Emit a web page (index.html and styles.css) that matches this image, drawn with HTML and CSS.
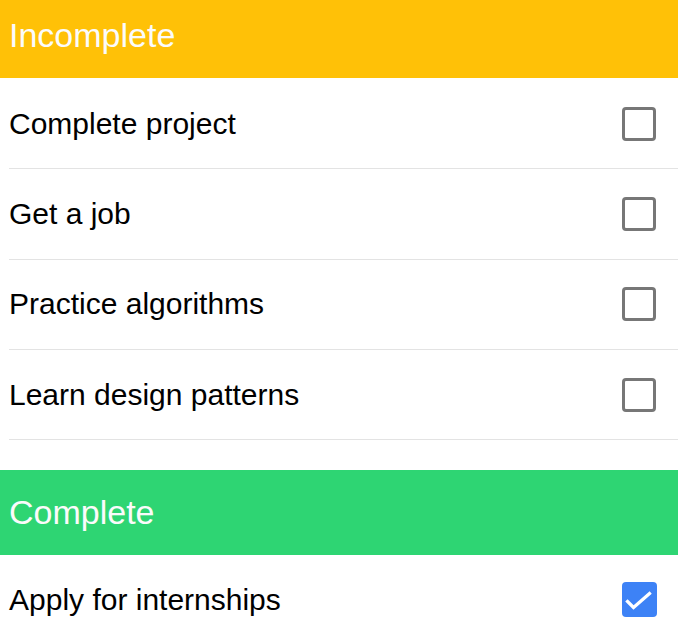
FILE: index.html
```html
<!DOCTYPE html>
<html>
<head>
<meta charset="utf-8">
<link rel="stylesheet" href="styles.css">
</head>
<body>
  <section class="group">
    <h2 class="header header-incomplete">Incomplete</h2>
    <ul class="list list-incomplete">
      <li class="item"><span class="label">Complete project</span><span class="box"></span></li>
      <li class="item"><span class="label">Get a job</span><span class="box"></span></li>
      <li class="item"><span class="label">Practice algorithms</span><span class="box"></span></li>
      <li class="item"><span class="label">Learn design patterns</span><span class="box"></span></li>
    </ul>
  </section>
  <section class="group">
    <h2 class="header header-complete">Complete</h2>
    <ul class="list">
      <li class="item"><span class="label">Apply for internships</span><span class="box box-checked"><svg width="35" height="35" viewBox="0 0 35 35"><polyline points="5.5,19.5 11.5,25.5 27.5,11.5" fill="none" stroke="#fff" stroke-width="3.2" stroke-linecap="square"/></svg></span></li>
    </ul>
  </section>
</body>
</html>
```
FILE: styles.css
```css
html, body {
  margin: 0;
  padding: 0;
  background: #fff;
  overflow: hidden;
}
body {
  font-family: "Liberation Sans", Arial, sans-serif;
  color: #000;
}
.group {
  display: block;
}
.header {
  margin: 0;
  font-weight: normal;
  font-size: 34px;
  color: #fbfbfb;
  padding: 0 9px;
  display: flex;
  align-items: center;
}
.header-incomplete {
  background: #ffc107;
  height: 78px;
  padding-bottom: 8px;
  box-sizing: border-box;
}
.header-complete {
  background: #2ed573;
  height: 85px;
  margin-top: 30px;
}
.list {
  list-style: none;
  margin: 0;
  padding: 0;
}
.list-incomplete {
  padding-top: 1px;
}
.item {
  display: flex;
  align-items: center;
  justify-content: space-between;
  height: 89.3px;
  margin-left: 9px;
  padding-right: 22px;
  border-bottom: 1px solid #e3e3e3;
  font-size: 30px;
}
.header-complete + .list .item {
  border-bottom: none;
}
.label {
  display: block;
}
.box {
  width: 34px;
  height: 34px;
  box-sizing: border-box;
  border: 3.5px solid #777;
  border-radius: 4px;
  display: block;
}
.box-checked {
  width: 35px;
  height: 35px;
  border: none;
  background: #3d82f6;
  border-radius: 4px;
  margin-right: -1px;
}
.box-checked svg {
  display: block;
}
```
